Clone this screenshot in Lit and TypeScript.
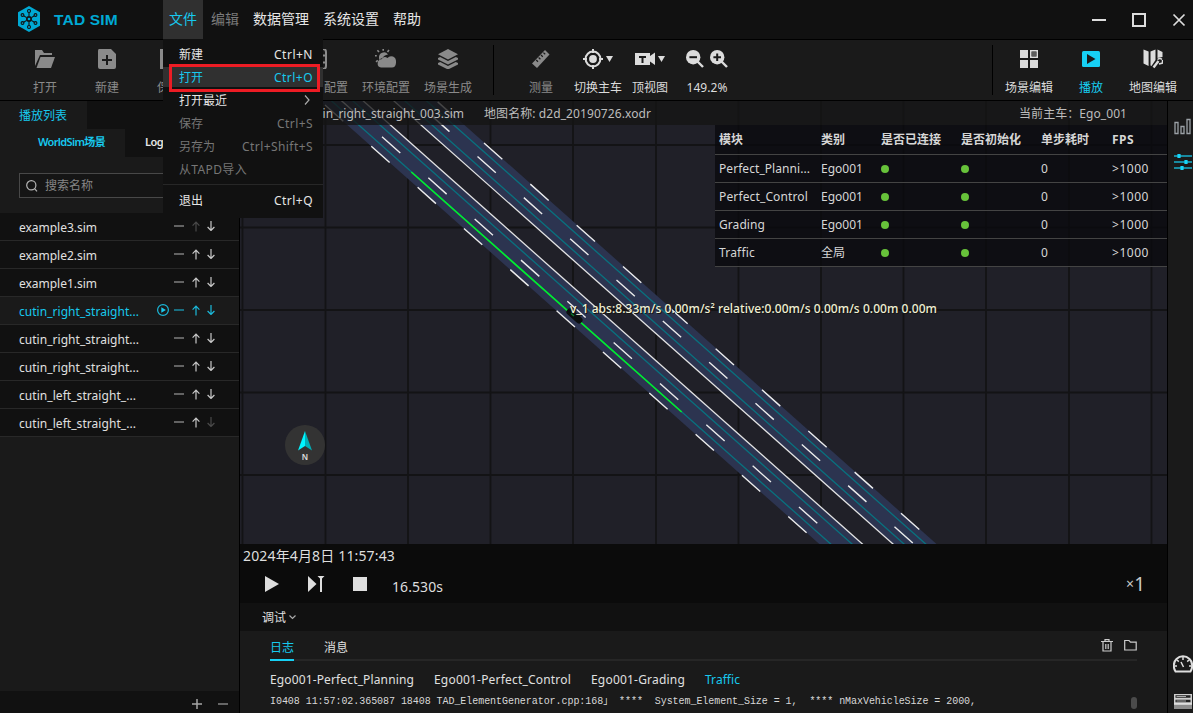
import { LitElement, html, css, svg, nothing } from "lit";
import { customElement, property, query } from "lit/decorators.js";
import { classMap } from "lit/directives/class-map.js";

/** Single-line label whose tracking is spread so that it fills a given width. */
@customElement("fit-label")
class FitLabel extends LitElement {
  @property() text = "";
  @property({ type: Number }) w = 0;
  @query("span") span!: HTMLSpanElement;
  static styles = css`
    :host { display: inline-block; white-space: pre; text-align: left; flex: none; }
  `;
  updated() {
    if (!this.w) return;
    this.span.style.letterSpacing = "0px";
    const natural = this.span.getBoundingClientRect().width;
    this.span.style.letterSpacing = (this.w - natural) / this.text.length + "px";
    this.style.width = this.w + "px";
  }
  render() {
    return html`<span>${this.text}</span>`;
  }
}

const lbl = (text: string, w = 0) => html`<fit-label .text=${text} .w=${w}></fit-label>`;

const icons = {
  logo: svg`<path d="M12 0 23 6.2V19.8L12 26 1 19.8V6.2Z" fill="#00a9d4"/><g stroke="#111" stroke-width="1.1" fill="none"><circle cx="12" cy="5" r="1.5"/><circle cx="12" cy="21" r="1.5"/><circle cx="5.500" cy="9" r="1.4"/><circle cx="18.500" cy="9" r="1.4"/><circle cx="5.500" cy="17" r="1.4"/><circle cx="18.500" cy="17" r="1.4"/><path d="M12 6.500V10M12 16V19.500M6.700 9.800 9.600 11.600M17.300 9.800 14.400 11.600M6.700 16.200 9.600 14.400M17.300 16.200 14.400 14.400"/></g><circle cx="12" cy="13" r="3" fill="#111"/><circle cx="12" cy="13" r="1.300" fill="#00a9d4"/>`,
  open: svg`<path d="M0 17V1H7L9 4H17V6H5Z"/><path d="M5.5 8H20L16 19H1.5Z"/>`,
  add: svg`<path fill-rule="evenodd" d="M2 0H14L19 5V18Q19 20 17 20H3Q1 20 1 18V2Q1 0 2 0ZM9 6V10H5V12H9V16H11V12H15V10H11V6Z"/>`,
  save: svg`<path d="M1 0H15L20 5V20H1Z"/>`,
  chain: svg`<g fill="none" stroke="currentColor" stroke-width="2"><rect x="4" y="0" width="10" height="20" rx="3"/><path d="M8 6.500H14M8 13.500H14"/></g>`,
  weather: svg`<g stroke="currentColor" stroke-width="1.6"><path d="M8.2-.5V1.8M2.4 1.2 4 3M14 1 12.5 3M-.6 6.8H1.8M1 12.8 2.8 11.4"/></g><path d="M4 9A5 5 0 0 1 13 5.5Q9 6 7.5 9Q5 9.500 4.500 11Q4 10 4 9Z"/><path d="M6 18.500A4.200 4.200 0 0 1 6.500 10.200Q9 6.500 12.500 9Q14.500 6.500 18 7.600Q21.500 9 21 14Q20.500 18.500 17 18.500Z"/>`,
  layers: svg`<path d="M10 0 20 5.200 10 10.400 0 5.200Z"/><path d="M0 9 2.200 8 10 12 17.800 8 20 9V10.500L10 15.500 0 10.500ZM0 14 2.200 13 10 17 17.800 13 20 14V15.500L10 20.500 0 15.500Z"/>`,
  ruler: svg`<path d="M14 1 18.500 5.500 6 19 1 14.500Z"/><path d="M5.200 11 7 12.700M7.600 8.500 9.400 10.200M10 6 11.800 7.700M12.400 3.600 14.200 5.300" stroke="#1a1a1a" stroke-width="1.200"/>`,
  target: svg`<g fill="none" stroke="currentColor" stroke-width="2"><circle cx="10" cy="10" r="7.400"/><path d="M10 0V4M10 16V20M0 10H4M16 10H20"/></g><circle cx="10" cy="10" r="3.900"/>`,
  camera: svg`<path fill-rule="evenodd" d="M0 4H15V7L20 3.500V16L15 12.500V16H0ZM4 7V9H6.500V14H8.500V9H11V7Z"/>`,
  zoomOut: svg`<path d="M11 11 17 17" stroke="currentColor" stroke-width="2.400"/><circle cx="7.200" cy="7.200" r="7.200"/><path d="M3.400 7.200H11" stroke="#1a1a1a" stroke-width="2"/>`,
  zoomIn: svg`<path d="M11 11 17 17" stroke="currentColor" stroke-width="2.400"/><circle cx="7.200" cy="7.200" r="7.200"/><path d="M3.400 7.200H11M7.200 3.400V11" stroke="#1a1a1a" stroke-width="2"/>`,
  grid: svg`<path fill-rule="evenodd" d="M1 1H9V9H1ZM11 1H19V9H11ZM12.500 2.500V7.500H17.500V2.500ZM1 11H9V19H1ZM11 11H19V19H11Z"/><rect x="13" y="3" width="4" height="4" opacity=".35"/>`,
  playBox: svg`<rect x="1" y="2" width="18" height="16" rx="1.500"/><path d="M6 5 14.500 10 6 15Z" fill="#1a1a1a"/>`,
  mapEdit: svg`<path d="M.500.500 5.600 2.500V17L.500 14.500ZM7.500 2.500 12.500.500V11L8.500 17 7.500 16.500ZM14.500.500 19.500 3V8L17 8.500 14.500 9Z"/><path d="M10.500 18.500 15.500 12" stroke="currentColor" stroke-width="2.400"/><path d="M14.500 10.500Q17 8.500 19 10.500M19.500 11V14L16 15" stroke="currentColor" stroke-width="1.500" fill="none"/>`,
};

const ico = (g: unknown, w = 20, h = 20) =>
  html`<svg class="ico" width=${w} height=${h} viewBox="0 0 ${w} ${h}" fill="currentColor">${g}</svg>`;

const up = svg`<path d="M5 10.500V1M1.600 4.600 5 1.200 8.400 4.600"/>`;
const down = svg`<path d="M5 0V9.500M1.600 6 5 9.500 8.400 6"/>`;

const scenes: [string, number][] = [
  ["example3.sim", 78], ["example2.sim", 78], ["example1.sim", 78],
  ["cutin_right_straight...", 120], ["cutin_right_straight...", 120], ["cutin_right_straight...", 120],
  ["cutin_left_straight_...", 117], ["cutin_left_straight_...", 117],
];

const modules: [string, number, string, number][] = [
  ["Perfect_Planni...", 91, "Ego001", 42],
  ["Perfect_Control", 89, "Ego001", 42],
  ["Grading", 46, "Ego001", 42],
  ["Traffic", 36, "全局", 24],
];

/* road geometry: x where each line crosses y=125, and its horizontal run per pixel down */
const RUN = 1.1265;
const xAt = (x125: number, y: number) => x125 + (y - 125) * RUN;
const lane = (x: number, cls: string) =>
  svg`<path class=${cls} d="M${xAt(x, 95)} 95L${xAt(x, 550)} 550"/>`;
const dashes = (x: number, y: number) => {
  const sx = x - 46.33 * 3, sy = y - 41.14 * 3;
  return svg`<path class="dash" d="M${sx} ${sy}L${sx + 46.33 * 14} ${sy + 41.14 * 14}"/>`;
};
const band = (l: number, r: number) =>
  svg`<path fill="#2c3450" d="M${xAt(l, 95)} 95H${xAt(r, 95)}L${xAt(r, 550)} 550H${xAt(l, 550)}Z"/>`;

@customElement("app-root")
class AppRoot extends LitElement {
  static styles = css`
    :host { display: block; width: 1193px; height: 713px; overflow: hidden; position: relative; background: #1a1a1a; color: #e0e0e0; font: 12px/16px "Noto Sans", "Noto Sans CJK SC", sans-serif; }
    * { box-sizing: border-box; }
    svg { display: block; flex: none; }
    .shell { display: grid; grid-template-rows: 40px 61px 612px; height: 713px; }
    .title { display: flex; background: #111; border-bottom: 1px solid #000; align-items: center; font-size: 14px; }
    .logo { margin: 0 13px 1px 17px; }
    .brand { font: bold 15.500px/20px "Liberation Sans", sans-serif; color: #00a9d4; width: 109px; }
    .mi { height: 39px; line-height: 37px; padding: 0 7px; width: 42px; color: #e6e6e6; flex: none; }
    .mi.on { background: #303030; color: #17c9ee; padding: 0 6px; width: 40px; margin-right: 1px; }
    .mi.off { color: #7b7b7b; }
    .mi.wide { width: 70px; }
    .win { margin-left: auto; display: flex; align-items: center; gap: 26px; padding-right: 7px; }
    .bar { display: flex; background: #1a1a1a; border-bottom: 1px solid #000; padding-left: 14px; color: #8a8a8a; }
    .tool { width: 62px; display: flex; flex-direction: column; align-items: center; padding-top: 9px; }
    .tool .pic { height: 20px; display: flex; gap: 6px; align-items: center; margin-bottom: 11px; }
    .tool.lit { color: #dcdcdc; }
    .tool.cur { color: #17d0f4; }
    .tool.n { width: 52px; }
    .tool.n .pic { gap: 3px; }
    .tool.part { align-items: flex-end; padding-right: 7px; }
    .tool.part .pic { margin-right: 16px; }
    .gap { width: 31px; }
    .sep { width: 1px; height: 50px; background: #000; margin: 5px 16px 0 14px; }
    .sep.r { margin: 5px 5px 0 auto; }
    .right { margin-right: 9px; }
    .body { display: grid; grid-template-columns: 240px 927px 26px; min-height: 0; }
    .side { border-right: 1px solid #000; display: flex; flex-direction: column; background: #1a1a1a; }
    .tabs { display: flex; background: #111; height: 28px; line-height: 29px; flex: none; }
    .t1 { background: #1a1a1a; width: 87px; padding-left: 19px; color: #17c9ee; }
    .t2 { background: #1a1a1a; width: 125px; padding-left: 38px; color: #17c9ee; font-size: 11px; font-weight: 600; line-height: 26px; }
    .t3 { padding-left: 20px; color: #e6e6e6; font-size: 11px; font-weight: 600; line-height: 26px; }
    .find { margin: 16px 19px 15px 19px; height: 25px; border: 1px solid #484848; display: flex; align-items: center; padding-left: 6px; gap: 7px; color: #858585; background: #151515; flex: none; }
    .row { height: 28px; border-bottom: 1px solid #282828; background: #111; display: flex; align-items: center; padding: 3px 0 0 19px; flex: none; }
    .row.on { background: #1a1a1a; color: #17c9ee; }
    .ops { margin: 0 23px 4px auto; display: flex; align-items: center; gap: 5px; }
    .ops svg { fill: none; stroke: #c8c8c8; stroke-width: 1.200; }
    .ops .dim { stroke: #4a4a4a; }
    .on .ops svg { stroke: #1bb9da; }
    .ops i { width: 10px; height: 2px; background: #626262; margin-right: 2px; }
    .on .ops i { background: #1a6e80; }
    .foot { margin-top: auto; height: 22px; background: #111; display: flex; justify-content: flex-end; align-items: center; gap: 16px; padding: 4px 11px 0 0; }
    .main { display: grid; grid-template-rows: 443px 59px 28px 82px; min-width: 0; }
    .map { position: relative; overflow: hidden; background: #202028; }
    .white { stroke: #e4e4e4; stroke-width: 1.300; }
    .teal { stroke: #08727f; stroke-width: 1.300; }
    .dash { stroke: #ececec; stroke-width: 1.400; stroke-dasharray: 24.500 37.460; }
    .info { position: absolute; top: 0; left: 0; right: 0; height: 24px; background: rgba(20, 20, 20, .78); display: flex; align-items: center; color: #bdbdbd; padding: 2px 40px 0 65px; gap: 20px; }
    .info .last { margin-left: auto; }
    .veh { position: absolute; left: 330px; top: 200px; color: #f0f0d4; font-weight: 500; text-shadow: 1px 1px 0 #141414; }
    .north { position: absolute; left: 45px; top: 324px; }
    .grid { position: absolute; left: 475px; top: 24px; width: 452px; background: rgba(10, 10, 14, .8); color: #d6d6d6; }
    .gr { display: grid; grid-template-columns: 102px 60px 80px 80px 71px 55px; height: 28px; align-items: center; border-bottom: 1px solid #444; padding-left: 4px; }
    .gr.h { height: 30px; font-weight: 700; }
    .dot { width: 8px; height: 8px; border-radius: 50%; background: #67c23a; }
    .play { background: #0b0b0b; display: flex; flex-direction: column; color: #dedede; }
    .date { font-size: 14px; line-height: 18px; padding: 3px 0 1px 3px; }
    .ctl { display: flex; align-items: center; padding: 0 22px 0 24px; height: 36px; font-size: 14px; }
    .ctl .tm { margin: 5px 0 0 24px; }
    .ctl .x { margin-left: auto; font-size: 19px; display: flex; align-items: center; color: #c9c9c9; }
    .x small { font-size: 14px; }
    .dbg { background: #111; display: flex; align-items: center; padding: 1px 0 0 22px; gap: 3px; }
    .log { background: #1a1a1a; padding: 0 30px 0 30px; display: flex; flex-direction: column; overflow: hidden; }
    .lt { display: flex; height: 30px; border-bottom: 2px solid #262626; gap: 30px; line-height: 33px; flex: none; }
    .lt .a { color: #17c9ee; border-bottom: 2px solid #17d0f4; height: 30px; width: 24px; }
    .lt .b { display: flex; margin-left: auto; gap: 11px; padding-top: 8px; }
    .src { display: flex; gap: 20px; height: 20px; margin-top: 10px; line-height: 18px; flex: none; }
    .src .c { color: #17c9ee; }
    .txt { display: flex; justify-content: space-between; font: 10px/14px "Liberation Mono", "Noto Sans CJK SC", monospace; color: #d8d8d8; padding-top: 4px; }
    .thumb { width: 6px; height: 12px; border-radius: 3px; background: #4b4b4b; margin-top: 2px; }
    .rail { background: #1a1a1a; border-left: 1px solid #000; display: flex; flex-direction: column; padding: 17px 0 4px 6px; overflow: hidden; }
    .rail .s { margin-top: 18px; }
    .rail .g { margin-top: auto; margin-left: -1px; margin-bottom: 21px; }
    .menu { position: absolute; left: 163px; top: 39px; width: 160px; height: 179px; background: #111; padding-top: 4px; color: #e6e6e6; }
    .it { height: 23px; display: flex; justify-content: space-between; align-items: center; padding: 0 10px 0 16px; }
    .it.dis { color: #767676; }
    .it.hot { background: #303030; color: #17c9ee; height: 20px; margin: 1px 0 2px; padding-top: 1px; }
    .it svg { margin: -2px 3px 0 0; }
    .hr { height: 1px; background: #272727; margin: 3px 0 4px; }
    .ring { position: absolute; left: 169px; top: 64px; width: 151px; height: 28px; border: 3px solid #ed1c24; }
  `;

  private tool(pic: unknown, name: string, w: number, cls = "") {
    return html`<div class="tool ${cls}"><div class="pic">${pic}</div>${lbl(name, w)}</div>`;
  }

  private map() {
    const xs = [242.5, 325.5, 408, 490.5, 573, 656, 738.5, 821, 903.5, 986, 1069, 1151.5];
    const ys = [145, 227.500, 310, 392.500, 475];
    return html`<svg width="927" height="443" viewBox="240 101 927 443" fill="none">
      <g stroke="#131315" stroke-width="1.800">
        ${xs.map((x) => svg`<path d="M${x} 101V544"/>`)}${ys.map((y) => svg`<path d="M240 ${y}H1167"/>`)}
      </g>
      ${band(347.300, 390.400)}${band(421, 464.500)}
      ${[358.700, 380, 432, 453.700].map((x) => lane(x, "teal"))}
      ${[390.400, 421].map((x) => lane(x, "white"))}
      ${dashes(371.300, 146.200)}${dashes(382, 136.700)}${dashes(477.500, 156.500)}${dashes(484, 143)}
      <path d="M411.300 172 681.700 412" stroke="#00f02a" stroke-width="1.600"/>
      <path d="M570 312 579 320" stroke="#0c0f0f" stroke-width="7" stroke-linecap="round"/>
      <path d="M571 313.500 574 316" stroke="#0a7a2a" stroke-width="1.500"/>
    </svg>`;
  }

  render() {
    const tri = html`<svg width="7" height="6" viewBox="0 0 7 6" fill="currentColor"><path d="M0 0H7L3.500 6Z"/></svg>`;
    return html`
      <div class="shell">
        <div class="title">
          <svg class="logo" width="24" height="26" viewBox="0 0 24 26">${icons.logo}</svg>
          <div class="brand">${lbl("TAD SIM", 64)}</div>
          <div class="mi on">文件</div><div class="mi off">编辑</div>
          <div class="mi wide">数据管理</div><div class="mi wide">系统设置</div><div class="mi">帮助</div>
          <div class="win">
            <svg width="14" height="14" viewBox="0 0 14 14"><path d="M0 7H14" stroke="#ddd" stroke-width="2"/></svg>
            <svg width="14" height="14" viewBox="0 0 14 14"><path d="M1 1H13V13H1Z" fill="none" stroke="#ddd" stroke-width="2"/></svg>
            <svg width="14" height="14" viewBox="0 0 14 14"><path d="M1.500 1.500 12.500 12.500M12.500 1.500 1.500 12.500" stroke="#ddd" stroke-width="1.700"/></svg>
          </div>
        </div>
        <div class="bar">
          ${this.tool(ico(icons.open), "打开", 24)}
          ${this.tool(ico(icons.add), "新建", 24)}
          ${this.tool(ico(icons.save), "保存", 24)}
          <div class="tool"></div><div class="gap"></div>
          ${this.tool(ico(icons.chain), "配置", 24, "part")}
          ${this.tool(ico(icons.weather, 22), "环境配置", 48)}
          ${this.tool(ico(icons.layers), "场景生成", 48)}
          <div class="sep"></div>
          ${this.tool(ico(icons.ruler), "测量", 24)}
          ${this.tool(html`${ico(icons.target)}${tri}`, "切换主车", 48, "lit n")}
          ${this.tool(html`${ico(icons.camera)}${tri}`, "顶视图", 36, "lit n")}
          ${this.tool(html`${ico(icons.zoomOut, 18, 18)}${ico(icons.zoomIn, 18, 18)}`, "149.2%", 41, "lit")}
          <div class="sep r"></div>
          ${this.tool(ico(icons.grid), "场景编辑", 48, "lit")}
          ${this.tool(ico(icons.playBox), "播放", 24, "cur")}
          ${this.tool(ico(icons.mapEdit), "地图编辑", 48, "lit right")}
        </div>
        <div class="body">
          <div class="side">
            <div class="tabs"><div class="t1">播放列表</div></div>
            <div class="tabs"><div class="t2">${lbl("WorldSim场景", 67)}</div><div class="t3">${lbl("Log", 18)}</div></div>
            <div class="find">
              <svg width="12" height="12" viewBox="0 0 12 12" fill="none" stroke="#b5b5b5" stroke-width="1.200"><circle cx="5.300" cy="5.300" r="4.600"/><path d="M8.600 8.600 11 11.400"/></svg>
              搜索名称
            </div>
            ${scenes.map(([name, w], i) => html`
              <div class=${classMap({ row: true, on: i === 3 })}>
                ${lbl(name, w)}
                <div class="ops">
                  ${i === 3 ? html`<svg width="12" height="12" viewBox="0 0 12 12"><circle cx="6" cy="6" r="5.400"/><path d="M4.300 3.200 8.900 6 4.300 8.800Z" fill="#1bc9ee" stroke="none"/></svg>` : nothing}
                  <i></i>
                  <svg class=${i === 0 ? "dim" : ""} width="10" height="11" viewBox="0 0 10 11">${up}</svg>
                  <svg class=${i === 7 ? "dim" : ""} width="10" height="10" viewBox="0 0 10 10">${down}</svg>
                </div>
              </div>`)}
            <div class="foot">
              <svg width="10" height="10" viewBox="0 0 10 10"><path d="M0 5H10M5 0V10" stroke="#a5a5a5" stroke-width="1.500"/></svg>
              <svg width="10" height="10" viewBox="0 0 10 10"><path d="M0 5H10" stroke="#666" stroke-width="2"/></svg>
            </div>
          </div>
          <div class="main">
            <div class="map">
              ${this.map()}
              <div class="info">${lbl("cutin_right_straight_003.sim", 159)}${lbl("地图名称: d2d_20190726.xodr", 167)}<span class="last">${lbl("当前主车：Ego_001", 108)}</span></div>
              <div class="veh">${lbl("v_1 abs:8.33m/s 0.00m/s² relative:0.00m/s 0.00m/s 0.00m 0.00m", 367)}</div>
              <svg class="north" width="40" height="40" viewBox="0 0 40 40"><circle cx="20" cy="20" r="20" fill="#333"/><path d="M20 6 13 25.500 20 21Z" fill="#00f4ff"/><path d="M20 6 27 25.500 20 21Z" fill="#00aeb6"/><text x="20" y="35" text-anchor="middle" font-family="Noto Sans, sans-serif" font-size="8" font-weight="600" fill="#e0e0e0">N</text></svg>
              <div class="grid">
                <div class="gr h"><span>模块</span><span>类别</span><span>是否已连接</span><span>是否初始化</span><span>单步耗时</span>${lbl("FPS", 22)}</div>
                ${modules.map(([m, mw, c, cw]) => html`<div class="gr">${lbl(m, mw)}${lbl(c, cw)}<i class="dot"></i><i class="dot"></i>${lbl("0", 8)}${lbl(">1000", 37)}</div>`)}
              </div>
            </div>
            <div class="play">
              <div class="date">${lbl("2024年4月8日 11:57:43", 152)}</div>
              <div class="ctl">
                <svg width="104" height="18" viewBox="0 0 104 18" fill="#dedede"><path d="M1 1 15 9 1 17ZM44 1 52.500 9 44 17ZM53.500 1H60.500L58 3.500V17H56V3.500ZM89 2H103V16H89Z"/></svg>
                <span class="tm">${lbl("16.530s", 51)}</span>
                <span class="x"><small>×</small>1</span>
              </div>
            </div>
            <div class="dbg">调试<svg width="7" height="5" viewBox="0 0 7 5" fill="none" stroke="#aaa" stroke-width="1.200"><path d="M.500.500 3.500 3.500 6.500.500"/></svg></div>
            <div class="log">
              <div class="lt"><span class="a">日志</span><span>消息</span>
                <span class="b">
                  <svg width="12" height="13" viewBox="0 0 12 13" fill="none" stroke="#ccc" stroke-width="1.200"><path d="M0 2.500H12M4 2V.700H8V2M2 3V12H10V3M4.800 5V10M7.200 5V10"/></svg>
                  <svg width="13" height="12" viewBox="0 0 13 12" fill="none" stroke="#ccc" stroke-width="1.200"><path d="M.700 11V1.500H5L6.500 3.200H12.200V11Z"/></svg>
                </span>
              </div>
              <div class="src">${lbl("Ego001-Perfect_Planning", 144)}${lbl("Ego001-Perfect_Control", 137)}${lbl("Ego001-Grading", 94)}<span class="c">${lbl("Traffic", 35)}</span></div>
              <div class="txt">${lbl("I0408 11:57:02.365087 18408 TAD_ElementGenerator.cpp:168」 ****  System_Element_Size = 1,  **** nMaxVehicleSize = 2000,", 706)}<i class="thumb"></i></div>
            </div>
          </div>
          <div class="rail">
            <svg width="18" height="17" viewBox="0 0 18 17" fill="none" stroke="#9ba1a6" stroke-width="1.300"><path d="M1 4.500H4V15.500H1ZM7 8.500H10V15.500H7ZM13 1.500H16V15.500H13Z"/></svg>
            <svg class="s" width="18" height="18" viewBox="0 0 18 18" stroke="#18aecb" stroke-width="1.600"><path d="M0 3H18M0 9H18M0 15H18"/><path d="M5 1V5M12 7V11M8 13V17" stroke="#17d6fa" stroke-width="3.200"/></svg>
            <svg class="g" width="20" height="18" viewBox="0 0 20 18" fill="none" stroke="#dedede" stroke-width="2"><path d="M2.500 16.500Q.800 14 .800 10.500A9 9 0 0 1 19.200 10.500Q19.200 14 17.500 16.500Z"/><path d="M10 2V5M4 5 5.800 6.600M16 5 14.200 6.600M1.500 11H4M16 11H18.500M8 7 10.500 12" stroke-width="1.500"/></svg>
            <svg width="18" height="15" viewBox="0 0 18 15"><path d="M0 0H18V13H0Z" fill="#cfcfcf"/><path d="M1.500 2.500H16.500M1.500 7H16.500" stroke="#222" stroke-width="2.400"/><path d="M2.500 2.500H12M2.500 7H12" stroke="#aaa" stroke-width="1"/><path d="M0 10.500H18V15H0Z" fill="#8d8d8d"/><path d="M0 10H18" stroke="#eee" stroke-width="1"/></svg>
          </div>
        </div>
      </div>
      <div class="menu">
        <div class="it">新建${lbl("Ctrl+N", 39)}</div>
        <div class="it hot">打开${lbl("Ctrl+O", 39)}</div>
        <div class="it">打开最近<svg width="6" height="10" viewBox="0 0 6 10" fill="none" stroke="#aaa" stroke-width="1.200"><path d="M1 .500 5 5 1 9.500"/></svg></div>
        <div class="it dis">保存${lbl("Ctrl+S", 36)}</div>
        <div class="it dis">另存为${lbl("Ctrl+Shift+S", 71)}</div>
        <div class="it dis">${lbl("从TAPD导入", 68)}</div>
        <div class="hr"></div>
        <div class="it">退出${lbl("Ctrl+Q", 39)}</div>
      </div>
      <div class="ring"></div>`;
  }
}
